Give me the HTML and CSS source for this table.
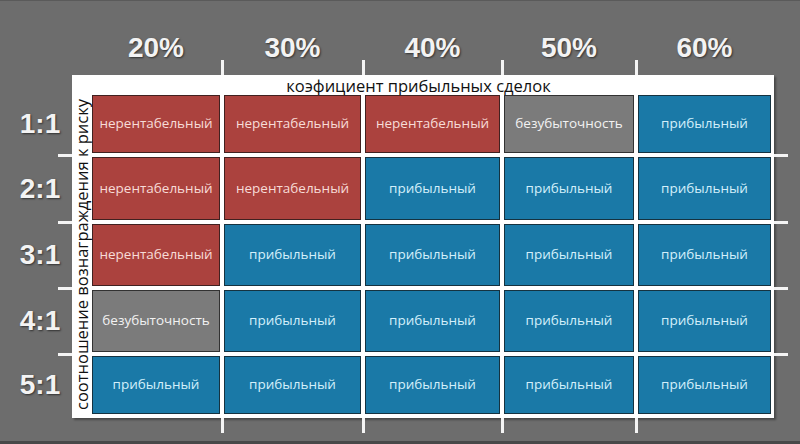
FILE: index.html
```html
<!DOCTYPE html>
<html lang="ru">
<head>
<meta charset="utf-8">
<title>Матрица прибыльности</title>
<link rel="stylesheet" href="styles.css">
</head>
<body>
<div class="chart">
  <div class="col-heads">
    <div class="col-head">20%</div>
    <div class="col-head">30%</div>
    <div class="col-head">40%</div>
    <div class="col-head">50%</div>
    <div class="col-head">60%</div>
  </div>

  <div class="ticks-h ticks-top">
    <span></span><i></i><span></span><i></i><span></span><i></i><span></span><i></i><span></span>
  </div>

  <div class="row-heads">
    <div class="row-head">1:1</div><i></i>
    <div class="row-head">2:1</div><i></i>
    <div class="row-head">3:1</div><i></i>
    <div class="row-head">4:1</div><i></i>
    <div class="row-head">5:1</div>
  </div>

  <div class="panel">
    <div class="panel-title">коэфициент прибыльных сделок</div>
    <div class="panel-side"><span>соотношение вознаграждения к риску</span></div>
    <div class="cells">
      <div class="cell loss">нерентабельный</div>
      <div class="cell loss">нерентабельный</div>
      <div class="cell loss">нерентабельный</div>
      <div class="cell even">безубыточность</div>
      <div class="cell profit">прибыльный</div>

      <div class="cell loss">нерентабельный</div>
      <div class="cell loss">нерентабельный</div>
      <div class="cell profit">прибыльный</div>
      <div class="cell profit">прибыльный</div>
      <div class="cell profit">прибыльный</div>

      <div class="cell loss">нерентабельный</div>
      <div class="cell profit">прибыльный</div>
      <div class="cell profit">прибыльный</div>
      <div class="cell profit">прибыльный</div>
      <div class="cell profit">прибыльный</div>

      <div class="cell even">безубыточность</div>
      <div class="cell profit">прибыльный</div>
      <div class="cell profit">прибыльный</div>
      <div class="cell profit">прибыльный</div>
      <div class="cell profit">прибыльный</div>

      <div class="cell profit">прибыльный</div>
      <div class="cell profit">прибыльный</div>
      <div class="cell profit">прибыльный</div>
      <div class="cell profit">прибыльный</div>
      <div class="cell profit">прибыльный</div>
    </div>
  </div>

  <div class="ticks-v">
    <span></span><i></i><span></span><i></i><span></span><i></i><span></span><i></i><span></span>
  </div>

  <div class="ticks-h ticks-bottom">
    <span></span><i></i><span></span><i></i><span></span><i></i><span></span><i></i><span></span>
  </div>
</div>
</body>
</html>
```

FILE: styles.css
```css
html, body {
  margin: 0;
  padding: 0;
  background: #6c6c6c;
}

.chart {
  box-sizing: border-box;
  width: 800px;
  height: 444px;
  background: #6d6d6d;
  border-top: 1px solid #5a5a5a;
  border-bottom: 3px solid #484848;
  display: grid;
  grid-template-columns: 72px 702px 14px;
  grid-template-rows: 59px 15px 343px 15px;
  font-family: "Open Sans", "Liberation Sans", sans-serif;
}

/* column headers */
.col-heads {
  grid-column: 2;
  grid-row: 1;
  display: grid;
  grid-template-columns: 128px 137px 135px 130px 133px;
  column-gap: 4px;
  padding-left: 20px;
  padding-top: 33px;
  align-items: start;
}

.col-head,
.row-head {
  font-family: "Liberation Sans", Arial, sans-serif;
  font-weight: bold;
  font-size: 28px;
  line-height: 28px;
  color: #f3f3f3;
  text-align: center;
  text-shadow: 1px 1px 2px rgba(0, 0, 0, 0.55);
}

/* tick marks outside the panel */
.ticks-h {
  grid-column: 2;
  display: grid;
  grid-template-columns: 128px 4px 137px 4px 135px 4px 130px 4px 133px;
  padding-left: 20px;
}

.ticks-top { grid-row: 2; }
.ticks-bottom { grid-row: 4; }

.ticks-h i {
  display: block;
  width: 3px;
  background: #f4f4f4;
  justify-self: center;
}

.row-heads {
  grid-column: 1;
  grid-row: 3;
  display: grid;
  grid-template-rows: 58px 4px 63px 4px 62px 4px 62px 4px 58px;
  padding-top: 20px;
}

.row-head {
  display: flex;
  align-items: center;
  justify-content: center;
  padding-left: 8px;
}

.row-heads i,
.ticks-v i {
  display: block;
  height: 3px;
  background: #f4f4f4;
  align-self: center;
}

.row-heads i {
  width: 14px;
  justify-self: end;
}

.ticks-v {
  grid-column: 3;
  grid-row: 3;
  display: grid;
  grid-template-rows: 58px 4px 63px 4px 62px 4px 62px 4px 58px;
  padding-top: 20px;
}

/* white panel */
.panel {
  grid-column: 2;
  grid-row: 3;
  background: #ffffff;
  box-shadow: 2px 2px 2px rgba(0, 0, 0, 0.35);
  display: grid;
  grid-template-columns: 20px 1fr;
  grid-template-rows: 20px 1fr;
  padding: 0 3px 4px 0;
}

.panel-title {
  grid-column: 1 / 3;
  font-size: 16.5px;
  line-height: 20px;
  color: #111;
  text-align: center;
  padding-right: 6px;
  padding-top: 1px;
}

.panel-side {
  display: flex;
  align-items: center;
  justify-content: center;
}

.panel-side span {
  writing-mode: vertical-rl;
  transform: rotate(180deg);
  font-size: 16.5px;
  line-height: 20px;
  color: #111;
  white-space: nowrap;
}

.cells {
  display: grid;
  grid-template-columns: 128px 137px 135px 130px 133px;
  grid-template-rows: 58px 63px 62px 62px 58px;
  gap: 4px;
}

.cell {
  box-sizing: border-box;
  border: 1px solid rgba(20, 20, 20, 0.7);
  display: flex;
  align-items: center;
  justify-content: center;
  font-size: 13.5px;
  padding-bottom: 2px;
}

.loss {
  background: #ab423e;
  color: #f7dcd8;
}

.even {
  background: #7b7b7b;
  color: #f2f2f2;
}

.profit {
  background: #1a79a7;
  color: #d4f0fb;
}
```
